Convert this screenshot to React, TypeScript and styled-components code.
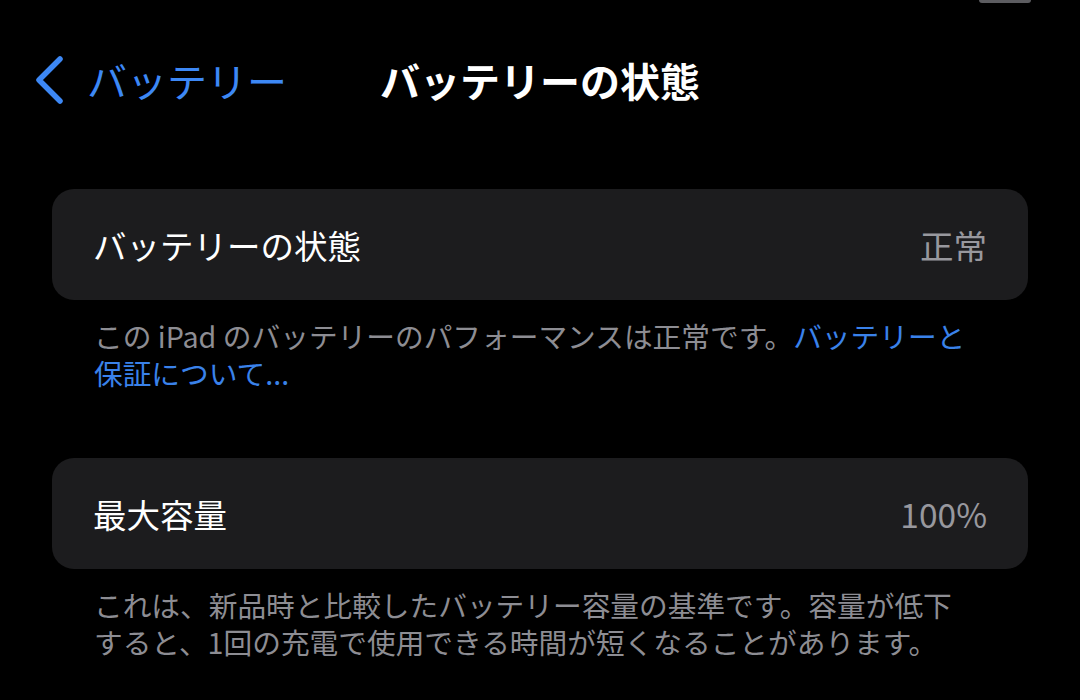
import React from 'react';
import styled, { createGlobalStyle } from 'styled-components';

const GlobalStyle = createGlobalStyle`
  html, body {
    margin: 0;
    padding: 0;
    background: #000;
  }
  body {
    font-family: "Noto Sans CJK JP", "Noto Sans", sans-serif;
    -webkit-font-smoothing: antialiased;
  }
`;

const Screen = styled.div`
  position: relative;
  width: 1080px;
  height: 700px;
  overflow: hidden;
  background: #000;
  color: #fff;
`;

const TopHandle = styled.div`
  position: absolute;
  top: -4px;
  right: 49px;
  width: 52px;
  height: 7px;
  border-radius: 3px;
  background: #5c5c60;
`;

const NavBar = styled.header`
  display: grid;
  grid-template-columns: 1fr auto 1fr;
  align-items: center;
  height: 160px;
`;

const BackButton = styled.div`
  display: flex;
  align-items: center;
  gap: 22px;
  margin-left: 33px;
  color: #3d88f5;
  font-size: 40px;
  justify-self: start;
`;

const Title = styled.h1`
  margin: 0;
  font-size: 40px;
  font-weight: 700;
  color: #fff;
`;

const Content = styled.main`
  display: flex;
  flex-direction: column;
  padding: 29px 52px 0;
`;

const Section = styled.section`
  display: flex;
  flex-direction: column;
  margin-bottom: 67px;
`;

const Card = styled.div`
  display: flex;
  align-items: center;
  justify-content: space-between;
  height: 111px;
  padding: 0 41px;
  box-sizing: border-box;
  background: #1c1c1e;
  border-radius: 22px;
`;

const Label = styled.span`
  font-size: 33.5px;
  color: #fff;
`;

const Value = styled.span`
  font-size: 33.5px;
  color: #98989e;
`;

const Footer = styled.p`
  margin: 17px 0 0;
  padding: 0 0 0 42px;
  font-size: 28.7px;
  line-height: 37px;
  color: #8d8d93;
  white-space: nowrap;
`;

const Link = styled.span`
  color: #3a82ea;
`;

function Chevron() {
  return (
    <svg width="32" height="50" viewBox="0 0 32 50" fill="none">
      <path
        d="M27 4 L6 25 L27 46"
        stroke="#3d88f5"
        strokeWidth="5.5"
        strokeLinecap="round"
        strokeLinejoin="round"
      />
    </svg>
  );
}

export default function App() {
  return (
    <Screen>
      <GlobalStyle />
      <TopHandle />
      <NavBar>
        <BackButton>
          <Chevron />
          <span>バッテリー</span>
        </BackButton>
        <Title>バッテリーの状態</Title>
        <div />
      </NavBar>
      <Content>
        <Section>
          <Card>
            <Label>バッテリーの状態</Label>
            <Value>正常</Value>
          </Card>
          <Footer>
            この iPad のバッテリーのパフォーマンスは正常です。<Link>バッテリーと</Link>
            <br />
            <Link>保証について...</Link>
          </Footer>
        </Section>
        <Section>
          <Card>
            <Label>最大容量</Label>
            <Value>100%</Value>
          </Card>
          <Footer>
            これは、新品時と比較したバッテリー容量の基準です。容量が低下
            <br />
            すると、1回の充電で使用できる時間が短くなることがあります。
          </Footer>
        </Section>
      </Content>
    </Screen>
  );
}
